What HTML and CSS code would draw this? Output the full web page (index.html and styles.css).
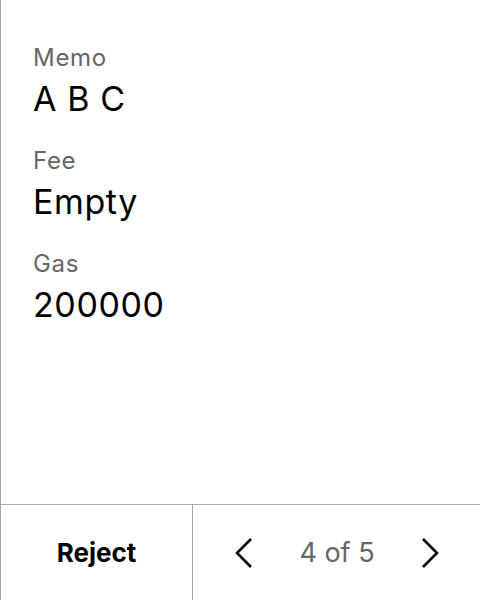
FILE: index.html
```html
<!DOCTYPE html>
<html>
<head>
<meta charset="utf-8">
<link rel="stylesheet" href="styles.css">
</head>
<body>
<div class="screen">
  <div class="content">
    <div class="field">
      <div class="label">Memo</div>
      <div class="value">A B C</div>
    </div>
    <div class="field">
      <div class="label">Fee</div>
      <div class="value">Empty</div>
    </div>
    <div class="field">
      <div class="label">Gas</div>
      <div class="value">200000</div>
    </div>
  </div>
  <div class="footer">
    <div class="reject">Reject</div>
    <div class="pager">
      <svg class="chev" width="20" height="32" viewBox="0 0 20 32"><path d="M17 2 L3 16 L17 30" fill="none" stroke="#000" stroke-width="2.6"/></svg>
      <span class="count">4 of 5</span>
      <svg class="chev" width="20" height="32" viewBox="0 0 20 32"><path d="M3 2 L17 16 L3 30" fill="none" stroke="#000" stroke-width="2.6"/></svg>
    </div>
  </div>
</div>
</body>
</html>
```
FILE: styles.css
```css
html, body {
  margin: 0;
  padding: 0;
  background: #fff;
}
body {
  font-family: Inter, "Noto Sans", sans-serif;
}
.screen {
  width: 480px;
  height: 600px;
  box-sizing: border-box;
  border-left: 1px solid #aaa;
  display: flex;
  flex-direction: column;
}
.content {
  flex: 1;
  padding: 40px 0 0 32px;
  display: flex;
  flex-direction: column;
  gap: 21px;
}
.field {
  display: flex;
  flex-direction: column;
}
.label {
  font-size: 24px;
  line-height: 36px;
  letter-spacing: 0.7px;
  color: #666;
}
.value {
  font-size: 34px;
  line-height: 46px;
  letter-spacing: 0.6px;
  color: #000;
}
.footer {
  height: 95px;
  border-top: 1px solid #aaa;
  display: flex;
}
.reject {
  width: 191px;
  border-right: 1px solid #aaa;
  display: flex;
  align-items: center;
  justify-content: center;
  font-size: 26px;
  font-weight: 700;
  color: #000;
}
.pager {
  flex: 1;
  display: flex;
  align-items: center;
  justify-content: space-between;
  padding: 0 40px 0 41px;
}
.count {
  font-size: 27px;
  color: #666;
}
```
